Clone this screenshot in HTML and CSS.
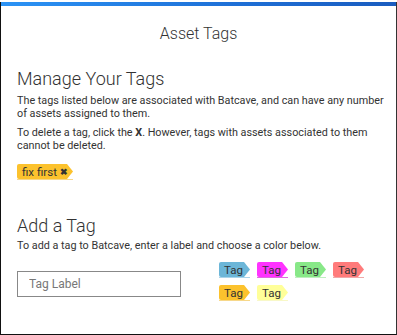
FILE: index.html
```html
<!DOCTYPE html>
<html>
<head>
<meta charset="utf-8">
<link rel="stylesheet" href="styles.css">
</head>
<body>
<div class="frame">
  <div class="bar"></div>
  <div class="content">
    <h1 class="title">Asset Tags</h1>
    <section class="manage">
      <h2 class="heading">Manage Your Tags</h2>
      <p class="text">The tags listed below are associated with Batcave, and can have any number of assets assigned to them.</p>
      <p class="text">To delete a tag, click the <b>X</b>. However, tags with assets associated to them cannot be deleted.</p>
      <div class="tag-list">
        <span class="tag tag-orange tag-big"><span class="tag-body">fix first<span class="tag-x">&#x2716;</span></span></span>
      </div>
    </section>
    <section class="add">
      <h2 class="heading">Add a Tag</h2>
      <p class="text">To add a tag to Batcave, enter a label and choose a color below.</p>
      <div class="add-row">
        <input class="label-input" type="text" placeholder="Tag Label">
        <div class="palette">
          <span class="tag tag-blue"><span class="tag-body">Tag</span></span>
          <span class="tag tag-magenta"><span class="tag-body">Tag</span></span>
          <span class="tag tag-green"><span class="tag-body">Tag</span></span>
          <span class="tag tag-red"><span class="tag-body">Tag</span></span>
          <span class="tag tag-orange"><span class="tag-body">Tag</span></span>
          <span class="tag tag-yellow"><span class="tag-body">Tag</span></span>
        </div>
      </div>
    </section>
  </div>
</div>
</body>
</html>
```

FILE: styles.css
```css
html, body {
  margin: 0;
  padding: 0;
  background: #ffffff;
}
body {
  padding-top: 2px;
  font-family: Roboto, "Liberation Sans", sans-serif;
  color: #333333;
}
.frame {
  height: 333px;
  box-sizing: border-box;
  border-left: 1px solid #111111;
  border-right: 1px solid #333333;
  border-bottom: 1px solid #111111;
  display: flex;
  flex-direction: column;
}
.bar {
  height: 4px;
  background: linear-gradient(to right, #2b93f5, #1e6fd6 60%, #1a5cbf);
}
.content {
  padding: 0 8px 0 16px;
}
.title {
  margin: 18px 8px 0 0;
  font-size: 16px;
  font-weight: 300;
  line-height: 20px;
  text-align: center;
  color: #333333;
}
.heading {
  margin: 0 0 4px;
  font-size: 18px;
  font-weight: 300;
  line-height: 22px;
  color: #333333;
}
.manage .heading {
  margin-top: 24px;
}
.text {
  margin: 0 0 6px;
  font-size: 10.8px;
  line-height: 13px;
  color: #333333;
}
.text b {
  font-weight: 700;
}
.tag-list {
  margin-top: 12px;
  display: flex;
}
.tag {
  display: inline-block;
  border-bottom: 1px solid transparent;
}
.tag-body {
  display: flex;
  align-items: center;
  box-sizing: border-box;
  width: 31px;
  height: 15px;
  padding: 0 0 0 5px;
  font-size: 11.5px;
  color: #333333;
  border-radius: 2px 0 0 2px;
  clip-path: polygon(0 0, calc(100% - 6px) 0, 100% 50%, calc(100% - 6px) 100%, 0 100%);
}
.tag-big .tag-body {
  width: 56px;
  padding: 0 0 0 5px;
  font-size: 11.5px;
}
.tag-x {
  margin-left: 3px;
  font-size: 9px;
  font-weight: 700;
}
.tag-blue .tag-body { background: #6cb6d8; }
.tag-blue { border-bottom-color: #a9d4ea; }
.tag-magenta .tag-body { background: #ff33ff; }
.tag-magenta { border-bottom-color: #e06ae0; }
.tag-green .tag-body { background: #88e888; }
.tag-green { border-bottom-color: #bfeebf; }
.tag-red .tag-body { background: #ff7b7b; }
.tag-red { border-bottom-color: #f0a8a8; }
.tag-orange .tag-body { background: #fcc22d; }
.tag-orange { border-bottom-color: #f7d88a; }
.tag-yellow .tag-body { background: #ffff99; }
.tag-yellow { border-bottom-color: #f8f8c8; }
.add {
  margin-top: 35px;
}
.add .heading {
  margin-bottom: 2px;
}
.add-row {
  margin-top: 10px;
  display: flex;
  align-items: flex-start;
  gap: 38px;
}
.label-input {
  width: 164px;
  height: 26px;
  box-sizing: border-box;
  margin: 9px 0 0;
  border: 1px solid #888888;
  border-radius: 0;
  padding: 0 11px;
  font-family: Roboto, "Liberation Sans", sans-serif;
  font-size: 12px;
  color: #333333;
  outline: none;
}
.label-input::placeholder {
  color: #777777;
}
.palette {
  display: grid;
  grid-template-columns: repeat(4, max-content);
  column-gap: 7px;
  row-gap: 7px;
}
```
